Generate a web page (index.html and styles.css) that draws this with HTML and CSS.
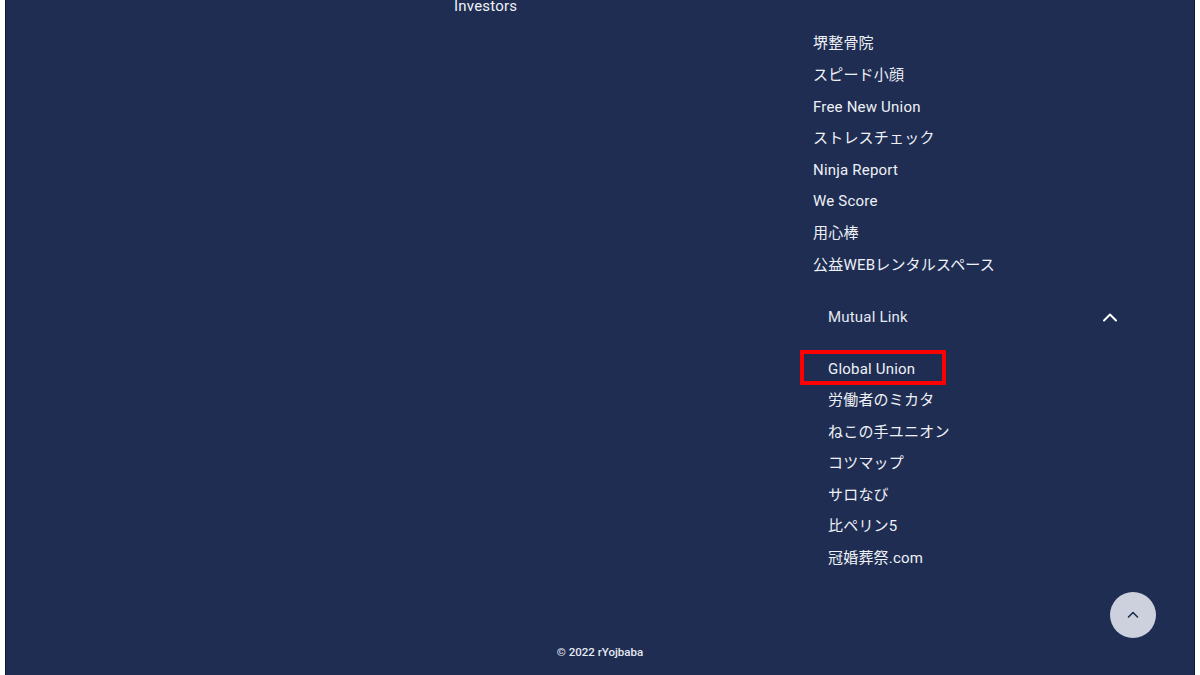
FILE: index.html
```html
<!DOCTYPE html>
<html lang="ja">
<head>
    <meta charset="UTF-8">
    <meta name="viewport" content="width=device-width, initial-scale=1.0">
    <title>rYojbaba Footer</title>
    <link rel="stylesheet" href="styles.css">
</head>
<body>
    <footer class="footer">
        <div class="footer-inner">
            <div class="col-brand"></div>
            <div class="col-about">
                <ul class="links">
                    <li><a href="#">Investors</a></li>
                </ul>
            </div>
            <div class="col-groups">
                <div class="group-head">
                    <span>Group Company</span>
                </div>
                <ul class="links">
                    <li><a href="#">堺整骨院</a></li>
                    <li><a href="#">スピード小顔</a></li>
                    <li><a href="#">Free New Union</a></li>
                    <li><a href="#">ストレスチェック</a></li>
                    <li><a href="#">Ninja Report</a></li>
                    <li><a href="#">We Score</a></li>
                    <li><a href="#">用心棒</a></li>
                    <li><a href="#">公益WEBレンタルスペース</a></li>
                </ul>
                <div class="group-head toggle">
                    <span>Mutual Link</span>
                    <svg class="chevron" width="16" height="10" viewBox="0 0 16 10">
                        <polyline points="2,8.5 8,2.5 14,8.5" fill="none" stroke="#ffffff" stroke-width="2" stroke-linecap="round" stroke-linejoin="round"/>
                    </svg>
                </div>
                <ul class="links sub">
                    <li class="marked"><a href="#">Global Union</a></li>
                    <li><a href="#">労働者のミカタ</a></li>
                    <li><a href="#">ねこの手ユニオン</a></li>
                    <li><a href="#">コツマップ</a></li>
                    <li><a href="#">サロなび</a></li>
                    <li><a href="#">比ペリン5</a></li>
                    <li><a href="#">冠婚葬祭.com</a></li>
                </ul>
            </div>
        </div>
        <p class="copyright">© 2022 rYojbaba</p>
    </footer>

    <a class="to-top" href="#">
        <svg width="14" height="10" viewBox="0 0 14 10">
            <polyline points="2.5,7 7,2.5 11.5,7" fill="none" stroke="#1f2d52" stroke-width="1.6" stroke-linecap="round" stroke-linejoin="round"/>
        </svg>
    </a>
</body>
</html>
```

FILE: styles.css
```css
html {
    background: #ffffff;
}
body {
    margin: 0;
    padding: 0 5px;
    height: 675px;
    overflow: hidden;
    font-family: Roboto, "Noto Sans CJK JP", sans-serif;
    font-size: 15px;
    font-weight: 400;
    letter-spacing: 0.2px;
    color: #eef1f7;
}
.footer {
    background: #1f2d52;
    border-left: 1px solid #0f1a38;
    border-right: 1px solid #0f1a38;
    padding-bottom: 14px;
}
.footer-inner {
    display: grid;
    grid-template-columns: 448px 359px 1fr;
    margin-top: -44px;
}
.col-about {
    padding-top: 35px;
}
.col-groups {
    padding-right: 73px;
}
.links {
    list-style: none;
    margin: 0;
    padding: 0;
    line-height: 31.6px;
}
.links a {
    color: #eef1f7;
    text-decoration: none;
}
.links.sub {
    padding-left: 15px;
}
.group-head {
    display: flex;
    align-items: center;
    justify-content: space-between;
    margin: 20.4px 0;
    padding-left: 15px;
    line-height: 31.6px;
    color: #e4e8f1;
}
.chevron {
    margin-right: 3px;
}
.marked {
    position: relative;
}
.marked::before {
    content: "";
    position: absolute;
    left: -28px;
    top: -4px;
    width: 138px;
    height: 27px;
    border: 4px solid #ff0000;
}
.copyright {
    margin: 67px 0 0;
    text-align: center;
    font-size: 11.5px;
    font-weight: 500;
    letter-spacing: 0;
    line-height: 20px;
    color: #e4e8f1;
}
.to-top {
    position: fixed;
    right: 44px;
    bottom: 37px;
    width: 46px;
    height: 46px;
    border-radius: 50%;
    background: #ccd1dd;
    display: flex;
    align-items: center;
    justify-content: center;
}
```
